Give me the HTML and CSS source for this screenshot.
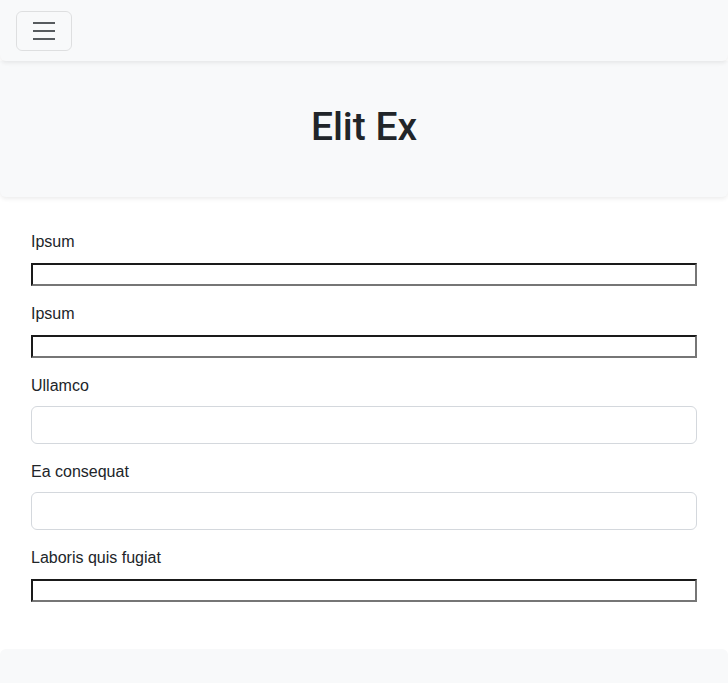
FILE: index.html
```html
<!DOCTYPE html>
<html lang="en">
<head>
<meta charset="utf-8">
<title>Elit Ex</title>
<link rel="stylesheet" href="styles.css">
</head>
<body>
<nav class="navbar">
  <button class="toggler" type="button" aria-label="Toggle navigation">
    <svg class="toggler-icon" width="30" height="30" viewBox="0 0 30 30"><path d="M4 7h22M4 15h22M4 23h22" stroke="rgba(33,37,41,0.75)" stroke-width="2" stroke-linecap="butt" fill="none"/></svg>
  </button>
</nav>
<header class="hero">
  <h1 class="title">Elit Ex</h1>
</header>
<main class="form">
  <div class="field">
    <label class="label">Ipsum</label>
    <input class="plain" type="text">
  </div>
  <div class="field">
    <label class="label">Ipsum</label>
    <input class="plain" type="text">
  </div>
  <div class="field">
    <label class="label">Ullamco</label>
    <input class="control" type="text">
  </div>
  <div class="field">
    <label class="label">Ea consequat</label>
    <input class="control" type="text">
  </div>
  <div class="field">
    <label class="label">Laboris quis fugiat</label>
    <input class="plain" type="text">
  </div>
</main>
<footer class="footer"></footer>
</body>
</html>
```
FILE: styles.css
```css
html, body {
  margin: 0;
  padding: 0;
  background: #fff;
  color: #212529;
  font-family: "Liberation Sans", Arial, sans-serif;
  font-size: 16px;
  line-height: 24px;
}

.navbar {
  position: relative;
  z-index: 2;
  box-sizing: border-box;
  height: 61px;
  padding: 11px 16px 0;
  background: #f8f9fa;
  border-radius: 0 0 6px 6px;
  box-shadow: 0 2px 4px rgba(0, 0, 0, 0.075);
}

.toggler {
  display: block;
  box-sizing: border-box;
  width: 56px;
  height: 40px;
  padding: 4px 12px;
  margin: 0;
  background: transparent;
  border: 1px solid rgba(0, 0, 0, 0.1);
  border-radius: 6px;
}

.toggler-icon {
  display: block;
}

.hero {
  position: relative;
  z-index: 1;
  box-sizing: border-box;
  height: 136px;
  padding-bottom: 4px;
  display: flex;
  align-items: center;
  justify-content: center;
  background: #f8f9fa;
  border-radius: 0 0 6px 6px;
  box-shadow: 0 2px 4px rgba(0, 0, 0, 0.075);
}

.title {
  margin: 0;
  font-family: Roboto, "Liberation Sans", Arial, sans-serif;
  font-size: 39px;
  line-height: 48px;
  font-weight: 500;
  color: #212529;
}

.form {
  padding: 33px 31px 31px;
}

.field {
  display: flex;
  flex-direction: column;
  margin-bottom: 16px;
}

.label {
  display: block;
  margin-bottom: 8px;
}

.plain {
  display: block;
  box-sizing: border-box;
  width: 100%;
  height: 23px;
  margin: 1px 0 0;
  padding: 1px 2px;
  border-style: solid;
  border-width: 2px;
  border-color: #1a1a1a #767676 #767676 #1a1a1a;
  background: #fff;
  font: 13.33px "Liberation Sans", Arial, sans-serif;
}

.control {
  display: block;
  box-sizing: border-box;
  width: 100%;
  height: 38px;
  margin: 0;
  padding: 6px 12px;
  border: 1px solid #d4d8dd;
  border-radius: 6px;
  background: #fff;
  font: 16px "Liberation Sans", Arial, sans-serif;
}

.footer {
  height: 40px;
  background: #f8f9fa;
  border-radius: 6px 6px 0 0;
}
```
